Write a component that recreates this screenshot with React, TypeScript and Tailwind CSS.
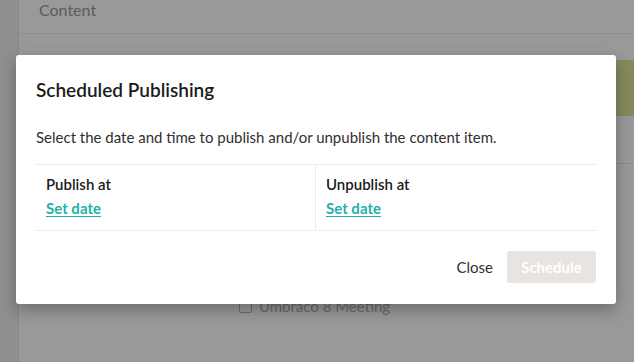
import React from 'react';

export default function App() {
  return (
    <div className="relative h-[362px] w-[634px] overflow-hidden bg-white font-['Lato','Noto_Sans',sans-serif]">
      {/* Page behind the dialog */}
      <div className="flex h-full">
        <div className="w-[19px] shrink-0 bg-[#efefef] border-r border-[#e4e4e4]" />
        <div className="flex flex-1 flex-col">
          <div className="flex h-[34px] items-start border-b border-[#ececec] px-5">
            <span className="text-[16px] leading-[20px] text-[#999999]">Content</span>
          </div>
          <div className="flex justify-end pt-[26px]">
            <div className="h-[56px] w-[20px] bg-[#e2e69b]" />
          </div>
          <div className="mt-[47px] border-t border-[#ececec]" />
          <div className="flex flex-1 items-start justify-center pt-[131px] pr-[24px]">
            <div className="flex items-center gap-[7px]">
              <span className="h-[13px] w-[13px] rounded-[2px] border border-[#b8b8b8] bg-white" />
              <span className="text-[15px] text-[#b0b0b0]">Umbraco 8 Meeting</span>
            </div>
          </div>
        </div>
      </div>

      {/* Overlay */}
      <div className="absolute inset-0 bg-black/40" />

      {/* Dialog */}
      <div className="absolute left-[16px] top-[55px] w-[600px] rounded-[3px] bg-white px-5 pb-[21px] pt-[22px] shadow-[0_6px_16px_rgba(0,0,0,0.3)]">
        <h2 className="text-[19px] font-semibold leading-[26px] text-[#1b1b1b]">Scheduled Publishing</h2>
        <p className="mt-[24px] text-[15px] leading-[20px] text-[#303030]">
          Select the date and time to publish and/or unpublish the content item.
        </p>
        <div className="mt-[17px] grid grid-cols-2 border-y border-[#ececec]">
          <div className="flex flex-col gap-[6px] border-r border-[#ececec] px-[10px] pb-[13px] pt-[10px]">
            <span className="text-[15px] font-semibold leading-[18px] text-[#1b1b1b]">Publish at</span>
            <a href="#" className="text-[15px] font-bold leading-[18px] text-[#1eb2a6] underline underline-offset-[2px]">Set date</a>
          </div>
          <div className="flex flex-col gap-[6px] px-[10px] pb-[13px] pt-[10px]">
            <span className="text-[15px] font-semibold leading-[18px] text-[#1b1b1b]">Unpublish at</span>
            <a href="#" className="text-[15px] font-bold leading-[18px] text-[#1eb2a6] underline underline-offset-[2px]">Set date</a>
          </div>
        </div>
        <div className="mt-[20px] flex items-center justify-end gap-[14px]">
          <button className="text-[15px] text-[#303030]">Close</button>
          <button className="h-[32px] w-[89px] rounded-[3px] bg-[#e9e4df] text-[15px] font-bold text-white">Schedule</button>
        </div>
      </div>
    </div>
  );
}
